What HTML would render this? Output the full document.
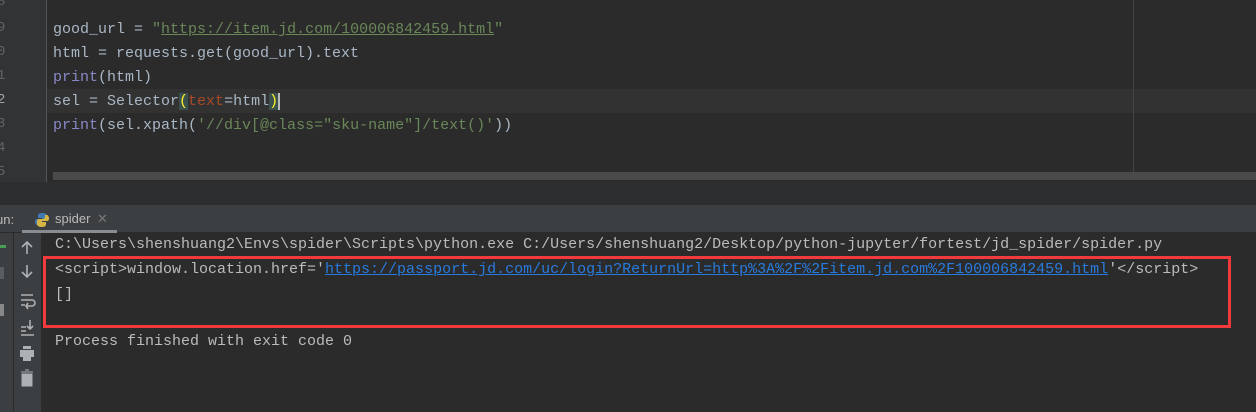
<!DOCTYPE html>
<html><head><meta charset="utf-8"><style>
*{margin:0;padding:0;box-sizing:border-box}
body{width:1256px;height:412px;background:#2b2b2b;position:relative;overflow:hidden;font-family:"Liberation Mono",monospace;font-size:15px}
.abs{position:absolute}
.ln{position:absolute;left:-3px;color:#606366;font-size:14px}
.code{position:absolute;left:53px;white-space:pre;color:#a9b7c6;line-height:24px}
.s{color:#6a8759}.k{color:#8888c6}.p{color:#aa4926}
.c{position:absolute;left:55px;white-space:pre;color:#bbbbbb}
</style></head><body>
<div class="abs" style="left:0;top:0;width:46px;height:182px;background:#313335"></div>
<div class="abs" style="left:46px;top:0;width:1px;height:182px;background:#555"></div>
<div class="abs" style="left:47px;top:89px;width:1209px;height:24px;background:#323232"></div>
<div class="abs" style="left:1133px;top:0;width:1px;height:180px;background:#444"></div>
<div class="ln" style="top:-6px">8</div>
<div class="ln" style="top:20px">9</div>
<div class="ln" style="top:44px">0</div>
<div class="ln" style="top:68px">1</div>
<div class="ln" style="top:92px;color:#a4a3a3">2</div>
<div class="ln" style="top:116px">3</div>
<div class="ln" style="top:140px">4</div>
<div class="ln" style="top:164px">5</div>
<div class="code" style="top:18px">good_url = <span class="s">"<u>https://item.jd.com/100006842459.html</u>"</span></div>
<div class="code" style="top:42px">html = requests.get(good_url).text</div>
<div class="code" style="top:66px"><span class="k">print</span>(html)</div>
<div class="code" style="top:90px">sel = Selector<span style="background:#3b514d;color:#ffef28">(</span><span class="p">text</span>=html<span style="background:#3b514d;color:#ffef28">)</span><span style="border-left:2px solid #bbb"></span></div>
<div class="code" style="top:114px"><span class="k">print</span>(sel.xpath(<span class="s">'//div[@class="sku-name"]/text()'</span>))</div>
<div class="abs" style="left:53px;top:172px;width:1203px;height:8px;background:#4a4a4a"></div>
<div class="abs" style="left:0;top:182px;width:1256px;height:23px;background:#2d2e30"></div>
<div class="abs" style="left:0;top:205px;width:1256px;height:27px;background:#3c3f41"></div>
<div class="abs" style="left:-4px;top:212px;color:#bbb;font-family:'Liberation Sans',sans-serif;font-size:13px">un:</div>
<svg class="abs" style="left:34px;top:212px" width="16" height="16" viewBox="0 0 16 16"><path d="M8 1C4 1 4 3 4 4v2h4v1H3C1 7 1 9 1 10s1 3 2 3h2v-2c0-1 1-2 2-2h4c1 0 2-1 2-2V4c0-2-2-3-5-3z" fill="#3e7bb5"/><path d="M8 15c4 0 4-2 4-3v-2H8V9h5c2 0 2-2 2-3s-1-3-2-3h-2v2c0 1-1 2-2 2H5c-1 0-2 1-2 2v3c0 2 2 3 5 3z" fill="#d5b645"/></svg>
<div class="abs" style="left:55px;top:211px;color:#bbb;font-family:'Liberation Sans',sans-serif;font-size:13px">spider</div>
<div class="abs" style="left:97px;top:211px;color:#777;font-family:'Liberation Sans',sans-serif;font-size:13px">✕</div>
<div class="abs" style="left:22px;top:230px;width:95px;height:3px;background:#8a8d90"></div>
<div class="abs" style="left:0;top:233px;width:13px;height:179px;background:#3c3f41"></div>
<div class="abs" style="left:13px;top:233px;width:1px;height:179px;background:#2b2b2b"></div>
<div class="abs" style="left:14px;top:233px;width:27px;height:179px;background:#3c3f41"></div>
<div class="abs" style="left:41px;top:233px;width:1px;height:179px;background:#2b2b2b"></div>
<div class="abs" style="left:0;top:245px;width:6px;height:3px;background:#499c54"></div>
<div class="abs" style="left:0;top:267px;width:4px;height:12px;background:#5a5d5f"></div>
<div class="abs" style="left:0;top:304px;width:4px;height:12px;background:#888"></div>
<svg class="abs" style="left:17px;top:238px" width="22" height="150" viewBox="0 0 20 150" stroke="#aeb1b3" fill="none" stroke-width="1.6">
<path d="M9 4v12M4 9l5-5 5 5"/>
<path d="M9 27v12M4 34l5 5 5-5"/>
<path d="M3 57h12M3 62h11a3 3 0 0 1 0 6H9M3 67h4M10 65l-2 3 2 3"/>
<path d="M3 89h5M3 93h5M12 82v9M9 88l3 3 3-3M3 97h13"/>
<path d="M5 108h8v3H5zM2 112h14v7H2zM5 119h8v4H5z" fill="#aeb1b3" stroke="none"/>
<path d="M4 136h10v12H4zM3 134h12M7 132h4" fill="#aeb1b3" stroke-width="1"/>
</svg>
<div class="c" style="top:236px">C:\Users\shenshuang2\Envs\spider\Scripts\python.exe C:/Users/shenshuang2/Desktop/python-jupyter/fortest/jd_spider/spider.py</div>
<div class="c" style="top:261px">&lt;script&gt;window.location.href='<u style="color:#287bde">https://passport.jd.com/uc/login?ReturnUrl=http%3A%2F%2Fitem.jd.com%2F100006842459.html</u>'&lt;/script&gt;</div>
<div class="c" style="top:286px">[]</div>
<div class="c" style="top:333px">Process finished with exit code 0</div>
<div class="abs" style="left:43px;top:256px;width:1188px;height:72px;border:3px solid #f03a3e"></div>
</body></html>
